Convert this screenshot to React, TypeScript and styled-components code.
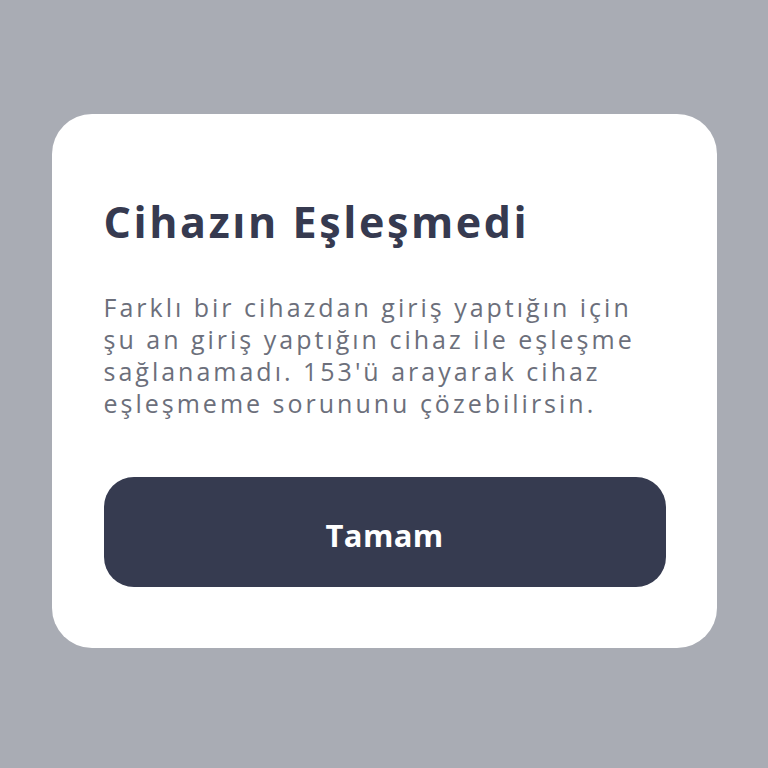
import styled, { createGlobalStyle } from "styled-components";

const GlobalStyle = createGlobalStyle`
  html, body {
    margin: 0;
    padding: 0;
    background: #a9acb4;
  }
`;

const Page = styled.div`
  width: 768px;
  height: 768px;
  box-sizing: border-box;
  padding-top: 114px;
  display: flex;
  align-items: flex-start;
  justify-content: center;
  background: #a9acb4;
  font-family: "Open Sans", Lato, sans-serif;
`;

const Card = styled.div`
  width: 665px;
  height: 534px;
  box-sizing: border-box;
  background: #ffffff;
  border-radius: 40px;
  padding: 80px 51px 0 52px;
  display: flex;
  flex-direction: column;
`;

const Title = styled.h1`
  margin: 0;
  font-size: 43px;
  font-weight: 700;
  line-height: 56px;
  color: #363a50;
  letter-spacing: 2.6px;
  white-space: nowrap;
`;

const Message = styled.p`
  margin: 41px 0 0;
  font-size: 25px;
  line-height: 32px;
  color: #6c6f7b;
  letter-spacing: 3px;
  white-space: nowrap;
`;

const Button = styled.button`
  margin-top: 58px;
  height: 110px;
  width: 100%;
  box-sizing: border-box;
  padding: 6px 0 0;
  border: none;
  border-radius: 30px;
  background: #363b50;
  color: #ffffff;
  font-family: inherit;
  font-size: 31px;
  font-weight: 700;
  letter-spacing: 0.3px;
  cursor: pointer;
`;

export default function App() {
  return (
    <>
      <GlobalStyle />
      <Page>
        <Card>
          <Title>Cihazın Eşleşmedi</Title>
          <Message>
            Farklı bir cihazdan giriş yaptığın için
            <br />
            şu an giriş yaptığın cihaz ile eşleşme
            <br />
            sağlanamadı. 153'ü arayarak cihaz
            <br />
            eşleşmeme sorununu çözebilirsin.
          </Message>
          <Button>Tamam</Button>
        </Card>
      </Page>
    </>
  );
}
